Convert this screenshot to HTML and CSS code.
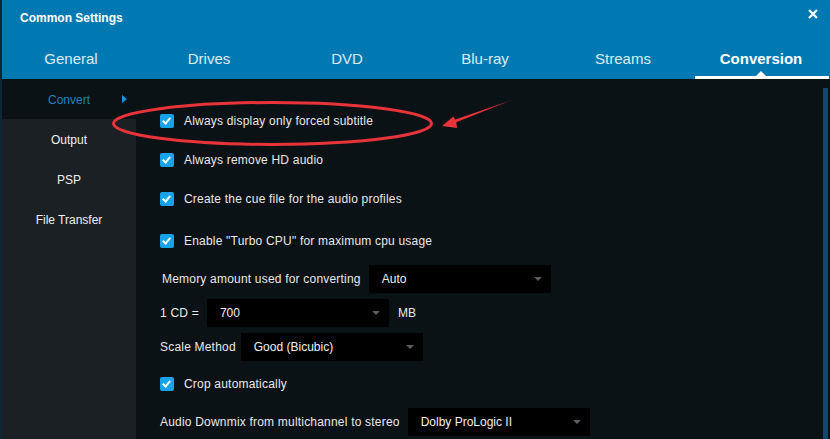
FILE: index.html
```
<!DOCTYPE html>
<html lang="en">
  <head>
    <meta charset="UTF-8">
    <title>Common Settings</title>
    <link rel="stylesheet" href="styles.css">
  </head>
  <body>
    <div class="window">
      <header class="titlebar">
        <div class="title-row">
          <span class="title">Common Settings</span>
          <svg class="close" width="10" height="10" viewBox="0 0 10 10">
            <path d="M1 1 L9 9 M9 1 L1 9" stroke="#fff" stroke-width="2.2"/>
          </svg>
        </div>
        <nav class="tabs">
          <div class="tab">General</div>
          <div class="tab">Drives</div>
          <div class="tab">DVD</div>
          <div class="tab">Blu-ray</div>
          <div class="tab">Streams</div>
          <div class="tab active">Conversion</div>
        </nav>
      </header>

      <div class="body">
        <aside class="sidebar">
          <div class="side-item active">Convert<span class="caret"></span></div>
          <div class="side-item">Output</div>
          <div class="side-item">PSP</div>
          <div class="side-item">File Transfer</div>
        </aside>

        <main class="content">
          <div class="row r1"><span class="check"></span>Always display only forced subtitle</div>
          <div class="row r2"><span class="check"></span>Always remove HD audio</div>
          <div class="row r3"><span class="check"></span>Create the cue file for the audio profiles</div>
          <div class="row r4"><span class="check"></span>Enable "Turbo CPU" for maximum cpu usage</div>
          <div class="row r5">Memory amount used for converting <div class="select">Auto</div></div>
          <div class="row r6">1 CD = <div class="select">700</div> MB</div>
          <div class="row r7">Scale Method <div class="select tight">Good (Bicubic)</div></div>
          <div class="row r8"><span class="check"></span>Crop automatically</div>
          <div class="row r9">Audio Downmix from multichannel to stereo <div class="select">Dolby ProLogic II</div></div>
        </main>

        <div class="scrollbar"></div>

        <!-- red markup drawn over the screenshot -->
        <svg class="markup" width="830" height="360" viewBox="0 79 830 360">
          <ellipse cx="272.5" cy="123.5" rx="159" ry="21" fill="none" stroke="#e8333b" stroke-width="3"/>
          <polygon points="513,99.6 455.6,122.5 454.6,119.7" fill="#e8333b"/>
          <polygon points="442,126 453.4,116.4 456.3,122 457,128" fill="#e8333b"/>
        </svg>
      </div>
    </div>
  </body>
</html>
```

FILE: styles.css
```
* {
  box-sizing: border-box;
}

body {
  margin: 0;
  font-family: "Liberation Sans", Arial, sans-serif;
  background: #0b1215;
}

.window {
  width: 830px;
  height: 439px;
  border-left: 2px solid #0d2735;
  display: flex;
  flex-direction: column;
  overflow: hidden;
}

/* title bar + tabs */
.titlebar {
  background: #0079b3;
  color: #fff;
}

.title-row {
  height: 35px;
  display: flex;
  align-items: center;
  justify-content: space-between;
  padding: 0 12px 0 18px;
}

.title {
  font-size: 12px;
  font-weight: bold;
}

.close {
  margin-top: -8px;
}

.tabs {
  display: flex;
  height: 44px;
}

.tab {
  flex: 1;
  display: flex;
  align-items: center;
  justify-content: center;
  padding-top: 2px;
  font-size: 15px;
  color: #dcecf5;
  position: relative;
}

.tab.active {
  color: #fff;
  font-weight: bold;
}

.tab.active::after {
  content: "";
  position: absolute;
  left: 3px;
  right: 1px;
  bottom: 0;
  height: 3px;
  background: #fff;
}

.tab.active::before {
  content: "";
  position: absolute;
  left: 50%;
  bottom: 3px;
  margin-left: -5px;
  border-left: 5px solid transparent;
  border-right: 5px solid transparent;
  border-bottom: 5px solid #fff;
}

/* main area */
.body {
  flex: 1;
  display: flex;
  position: relative;
  background: #0b1215;
}

.sidebar {
  width: 134px;
  background: #1a2023;
  font-size: 12px;
  color: #f0f0f0;
}

.side-item {
  height: 40px;
  padding-top: 2px;
  display: flex;
  align-items: center;
  justify-content: center;
  position: relative;
}

.side-item.active {
  background: #0b1215;
  color: #1c80c4;
}

.caret {
  position: absolute;
  right: 9px;
  top: 16px;
  border-top: 4px solid transparent;
  border-bottom: 4px solid transparent;
  border-left: 5px solid #1e8fdc;
}

.content {
  flex: 1;
  padding: 22px 0 0 24px;
  font-size: 12px;
  letter-spacing: 0.2px;
  color: #e8e8e8;
}

.row {
  display: flex;
  align-items: center;
  white-space: nowrap;
}

.r1, .r3 { height: 40px; }
.r2 { height: 38px; }
.r4 { height: 43px; }
.r5 { height: 34px; padding-left: 2px; }
.r6, .r7 { height: 34px; }
.r8 { height: 40px; }
.r9 { height: 36px; }

.check {
  width: 14px;
  height: 14px;
  margin-right: 10px;
  border-radius: 2px;
  background: #17a3ec;
  position: relative;
}

.check::after {
  content: "";
  position: absolute;
  left: 4px;
  top: 2px;
  width: 3px;
  height: 6px;
  border-right: 2px solid #fff;
  border-bottom: 2px solid #fff;
  transform: rotate(40deg);
}

.select {
  width: 182px;
  height: 28px;
  margin: 0 9px 0 8px;
  padding-left: 13px;
  background: #000;
  color: #f0f0f0;
  letter-spacing: 0;
  display: flex;
  align-items: center;
  position: relative;
}

.select.tight {
  margin-left: 5px;
}

.select::after {
  content: "";
  position: absolute;
  right: 9px;
  top: 12px;
  border-left: 4px solid transparent;
  border-right: 4px solid transparent;
  border-top: 4px solid #5c5c5c;
}

.scrollbar {
  width: 5px;
  margin: 9px 2px 0 0;
  background: #0b4a6c;
}

.markup {
  position: absolute;
  left: -2px;
  top: 0;
  pointer-events: none;
}
```
